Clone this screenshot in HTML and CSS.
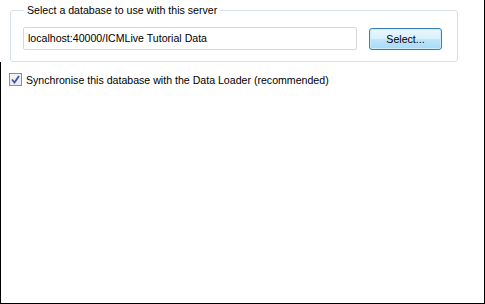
FILE: index.html
```html
<!DOCTYPE html>
<html lang="en">
<head>
  <meta charset="UTF-8">
  <title>Database selection</title>
  <link rel="stylesheet" href="styles.css">
</head>
<body>
  <div class="panel">
    <div class="top">
      <fieldset class="group">
        <legend>Select a database to use with this server</legend>
        <div class="row">
          <div class="field">localhost:40000/ICMLive Tutorial Data</div>
          <button class="btn">Select...</button>
        </div>
      </fieldset>
    </div>
    <div class="lower">
      <label class="check">
        <span class="box">
          <svg width="9" height="9" viewBox="0 0 9 9"><path d="M1 4.5 L3.5 7.5 L8 1" fill="none" stroke="#3b56a8" stroke-width="1.8"/></svg>
        </span>
        Synchronise this database with the Data Loader (recommended)
      </label>
    </div>
  </div>
</body>
</html>
```

FILE: styles.css
```css
html, body {
  margin: 0;
  padding: 0;
  background-color: #fff;
}

body {
  font-family: 'Liberation Sans', Arial, sans-serif;
  font-size: 10.6px;
  color: #000;
}

.panel {
  width: 484px;
  height: 303px;
  border-right: 1px solid #000;
  border-bottom: 1px solid #000;
  display: flex;
  flex-direction: column;
}

.top {
  padding: 4px 26px 0 10px;
}

.group {
  margin: 0;
  padding: 11px 0 0 12px;
  height: 58px;
  box-sizing: border-box;
  border: 1px solid #d5dfe5;
  border-radius: 3px;
}

.group legend {
  padding: 0 3px;
  margin-left: 1px;
  line-height: 12px;
}

.row {
  display: flex;
  align-items: center;
}

.field {
  width: 328px;
  height: 21px;
  line-height: 21px;
  padding-left: 4px;
  border: 1px solid #d3d9df;
  border-radius: 2px;
}

.btn {
  margin-left: 12px;
  width: 73px;
  height: 22px;
  font-family: inherit;
  font-size: 10.6px;
  color: #000;
  border: 1px solid #3c7fb1;
  border-radius: 3px;
  background: linear-gradient(#eaf6fd 0%, #d9f0fc 50%, #bee6fd 51%, #a7d9f5 100%);
  box-shadow: inset 0 0 0 1px #c9ecff;
  cursor: pointer;
}

.lower {
  flex: 1;
  border-left: 1px solid #000;
  padding: 11px 0 0 8px;
}

.check {
  display: flex;
  align-items: center;
  gap: 4px;
}

.box {
  width: 11px;
  height: 11px;
  border: 1px solid #8f8f8f;
  background: linear-gradient(#f4f4f4, #e8eaf0);
  display: flex;
  align-items: center;
  justify-content: center;
}
```
